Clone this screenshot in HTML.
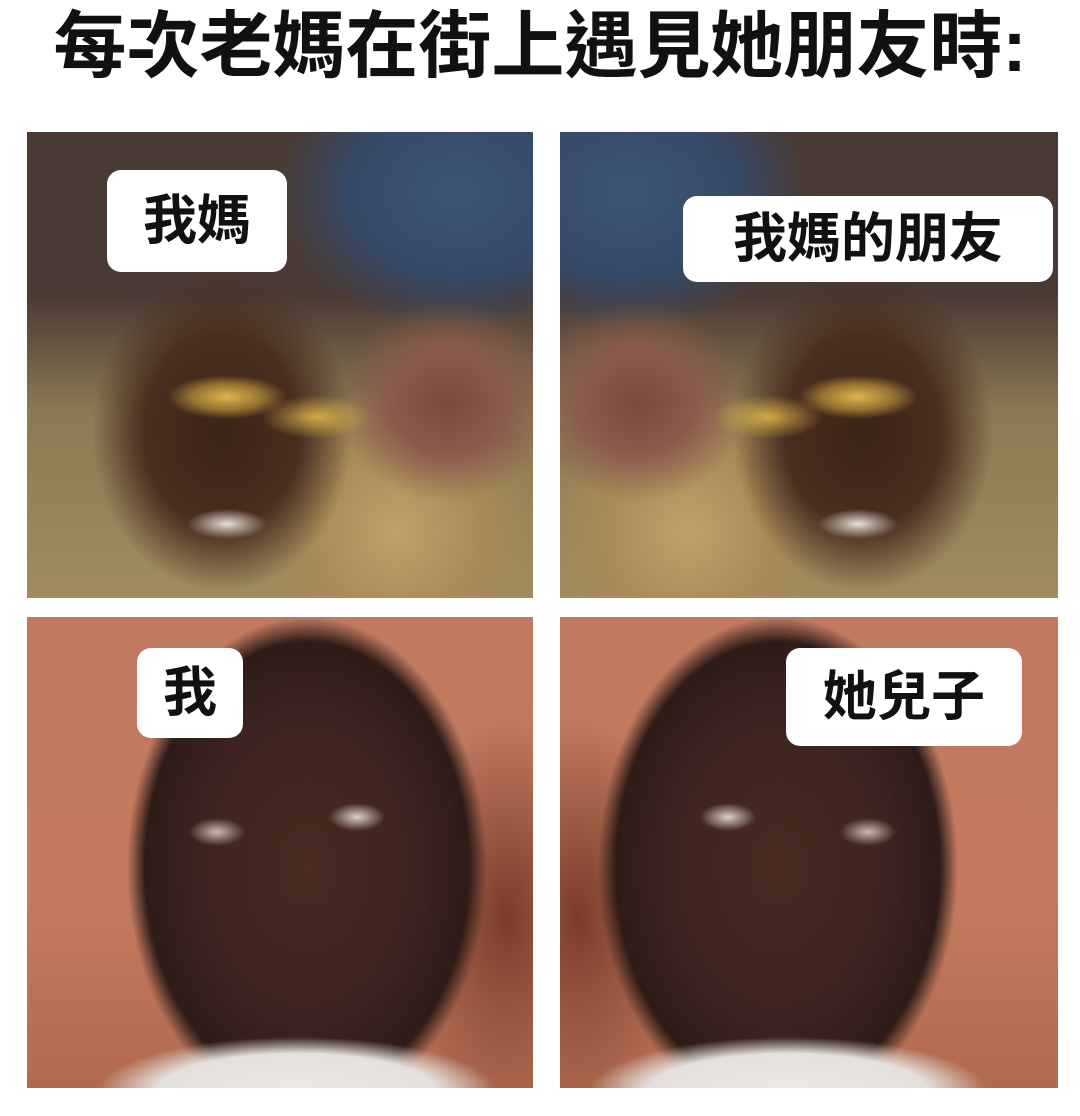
<!DOCTYPE html>
<html><head><meta charset="utf-8"><style>
*{margin:0;padding:0;box-sizing:border-box}
body{width:1080px;height:1116px;background:#fff;position:relative;overflow:hidden;font-family:"Liberation Sans","Noto Sans CJK TC",sans-serif}
.title{position:absolute;left:0;top:2px;width:1080px;text-align:center;font-size:73px;font-weight:bold;color:#111;line-height:90px;white-space:nowrap}
.p{position:absolute;overflow:hidden}
.top{background:
 radial-gradient(ellipse 60px 22px at 200px 265px,rgba(230,190,80,.95) 0%,rgba(200,160,60,.6) 60%,rgba(0,0,0,0) 100%),
 radial-gradient(ellipse 55px 22px at 290px 285px,rgba(220,180,70,.9) 0%,rgba(0,0,0,0) 100%),
 radial-gradient(ellipse 40px 15px at 200px 392px,#e8e0d8 0%,rgba(232,224,216,0) 100%),
 radial-gradient(ellipse 130px 160px at 195px 300px,#3c2418 0%,#4a2e20 60%,rgba(74,46,32,0) 100%),
 radial-gradient(ellipse 110px 100px at 420px 270px,#7a4a3e 0%,#8a5a4c 50%,rgba(138,90,76,0) 100%),
 radial-gradient(ellipse 140px 150px at 370px 400px,#c0a06a 0%,#a88a58 60%,rgba(168,138,88,0) 100%),
 radial-gradient(ellipse 180px 140px at 430px 60px,#3e5576 0%,#364a68 60%,rgba(54,74,104,0) 100%),
 linear-gradient(180deg,#4a3a34 0%,#4a3a34 35%,#8c7a52 60%,#a08c5e 100%);}
.bot{background:
 radial-gradient(ellipse 200px 55px at 270px 475px,#ece8e4 0%,#e4e0dc 70%,rgba(228,224,220,0) 100%),
 radial-gradient(ellipse 28px 14px at 330px 200px,#ddd0c8 0%,rgba(0,0,0,0) 100%),
 radial-gradient(ellipse 28px 14px at 190px 215px,#ccb8b0 0%,rgba(0,0,0,0) 100%),
 radial-gradient(ellipse 180px 250px at 280px 250px,#4a2a22 0%,#3e2420 60%,#2e1c18 90%,rgba(46,28,24,0) 100%),
 radial-gradient(ellipse 110px 200px at 480px 300px,#7a3c2a 0%,rgba(122,60,42,0) 100%),
 linear-gradient(180deg,#c07a60 0%,#c47a5e 60%,#b06a50 100%);}
.m{transform:scaleX(-1)}
.lb{position:absolute;background:#fff;border-radius:14px;color:#111;font-size:54px;font-weight:bold;text-align:center;line-height:1;display:flex;align-items:center;justify-content:center;white-space:nowrap}
</style></head><body>
<div class="title">每次老媽在街上遇見她朋友時:</div>
<div class="p top" style="left:27px;top:132px;width:506px;height:466px"></div>
<div class="p top m" style="left:560px;top:132px;width:498px;height:466px"></div>
<div class="p bot" style="left:27px;top:617px;width:506px;height:471px"></div>
<div class="p bot m" style="left:560px;top:617px;width:498px;height:471px"></div>
<div class="lb" style="left:107px;top:170px;width:180px;height:102px">我媽</div>
<div class="lb" style="left:683px;top:196px;width:370px;height:86px">我媽的朋友</div>
<div class="lb" style="left:137px;top:648px;width:106px;height:90px">我</div>
<div class="lb" style="left:786px;top:648px;width:236px;height:98px">她兒子</div>
</body></html>
